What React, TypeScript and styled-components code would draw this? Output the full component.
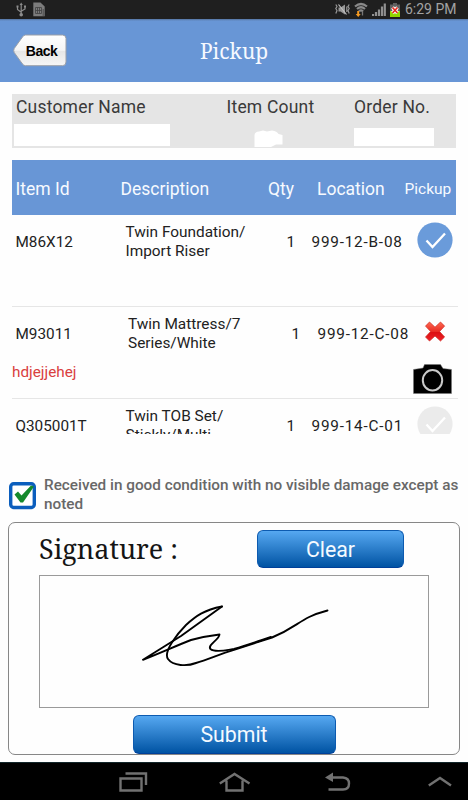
import React from 'react';
import styled, { createGlobalStyle } from 'styled-components';

const GlobalStyle = createGlobalStyle`
  * { box-sizing: border-box; }
  body { margin: 0; background: #fefefe; font-family: Roboto, "Liberation Sans", sans-serif; }
  button { font-family: inherit; }
`;

const Screen = styled.div`
  width: 468px;
  height: 800px;
  display: flex;
  flex-direction: column;
  overflow: hidden;
  background: #fefefe;
`;

const StatusBar = styled.div`
  height: 19px;
  flex: none;
  display: flex;
  align-items: center;
  justify-content: space-between;
  padding: 0 11.5px 0 16px;
  background: #1f1f1f;
`;

const StatusGroup = styled.div<{ $gap: number }>`
  display: flex;
  align-items: center;
  gap: ${(p) => p.$gap}px;
`;

const Clock = styled.span`
  font-size: 14px;
  line-height: 19px;
  color: #a3a3a3;
  margin-left: 1px;
`;

const Header = styled.header`
  height: 63px;
  flex: none;
  display: grid;
  grid-template-columns: 54px 1fr 54px;
  align-items: center;
  padding: 0 13px;
  background: linear-gradient(#55749f 0, #6896d6 2px);
`;

const BackButton = styled.button`
  display: grid;
  width: 54px;
  height: 33px;
  padding: 0;
  border: 0;
  background: none;

  > * { grid-area: 1 / 1; }
`;

const BackLabel = styled.span`
  align-self: center;
  padding-left: 3px;
  font: 700 14px/16px "Liberation Sans", sans-serif;
  letter-spacing: -0.5px;
  color: #000;
`;

const Title = styled.h1`
  margin: 0;
  text-align: center;
  font: 400 21px/30px "Noto Serif", serif;
  color: #f6f9ff;
`;

const InfoPanel = styled.section`
  flex: none;
  display: grid;
  grid-template-columns: 210.5px 127.5px 1fr;
  height: 54px;
  width: 444px;
  margin: 12px 0 0 12px;
  padding-left: 4px;
  background: #e5e5e5;
`;

const Field = styled.div`
  display: flex;
  flex-direction: column;
  justify-content: space-between;
  padding-bottom: 2px;
`;

const FieldLabel = styled.span`
  padding-top: 3px;
  font-size: 17.5px;
  line-height: 21px;
  letter-spacing: 0.2px;
  color: #3a3a3a;
  white-space: nowrap;
`;

const FieldValue = styled.div<{ $width: number; $height: number; $shift?: number }>`
  width: ${(p) => p.$width}px;
  height: ${(p) => p.$height}px;
  margin-left: ${(p) => p.$shift ?? 0}px;
  background: #fff;
`;

const BlankCount = styled.svg`
  display: block;
  width: 29px;
  height: 17px;
  margin: 0 0 -1px 27px;
`;

const TableHead = styled.div`
  flex: none;
  display: grid;
  grid-template-columns: 105px 147.5px 49px 87.5px 1fr;
  align-items: center;
  width: 444px;
  height: 55px;
  margin: 12px 0 0 12px;
  padding: 2px 0 0 3.5px;
  background: #6896d6;
  color: #f7faff;
`;

const HeadCell = styled.span<{ $small?: boolean }>`
  font-size: ${(p) => (p.$small ? 15.5 : 17.5)}px;
  line-height: 22px;
  white-space: nowrap;
`;

const ItemList = styled.div`
  flex: none;
  height: 219px;
  width: 446px;
  margin-left: 12px;
  overflow: hidden;
`;

const ItemRow = styled.div`
  height: 92px;
  border-bottom: 1px solid #e6e6e6;
  display: flex;
  justify-content: space-between;
`;

const ItemInfo = styled.div`
  width: 400px;
`;

const ItemCells = styled.div<{ $shifted?: boolean }>`
  display: grid;
  grid-template-columns:
    ${(p) => (p.$shifted ? '112.5px 163.5px 26px' : '110px 161px 25px')} 1fr;
  height: 55px;
  padding: 8px 0 0 3.5px;
`;

const Cell = styled.span<{ $spacing?: number }>`
  padding-top: 10px;
  font-size: 15.3px;
  line-height: 19px;
  letter-spacing: ${(p) => p.$spacing ?? 0}px;
  color: #222;
  white-space: nowrap;
`;

const DescriptionCell = styled.span`
  font-size: 15.4px;
  line-height: 18.7px;
  color: #222;
  white-space: pre-line;
`;

const Note = styled.div`
  padding-top: 1px;
  font-size: 15.3px;
  line-height: 18px;
  color: #d9403f;
`;

const ItemAction = styled.div`
  width: 46px;
  display: flex;
  flex-direction: column;
  align-items: center;
  padding-top: 7px;
`;

const Mark = styled.svg`
  display: block;
  flex: none;
`;

const CameraIcon = styled.svg`
  display: block;
  flex: none;
  width: 39px;
  height: 30px;
  margin: 14px 6px 0 0;
`;

const Consent = styled.label`
  flex: none;
  display: flex;
  gap: 7px;
  width: 451px;
  height: 88px;
  padding-top: 42px;
  margin-left: 9px;
`;

const CheckIcon = styled.svg`
  flex: none;
  width: 28px;
  height: 28px;
  margin-top: 6px;
`;

const ConsentText = styled.span`
  font-size: 15.3px;
  font-weight: 500;
  line-height: 18.6px;
  color: #686868;
  white-space: pre;
`;

const SignatureCard = styled.section`
  flex: none;
  display: flex;
  flex-direction: column;
  width: 452px;
  height: 233px;
  margin-left: 8px;
  border: 1px solid #878787;
  border-radius: 7px;
`;

const SignatureHead = styled.div`
  display: flex;
  justify-content: space-between;
  width: 395px;
  height: 52px;
  padding-left: 30px;
  padding-top: 7px;
`;

const SignatureLabel = styled.h2`
  margin: 0;
  font: 400 27px/37px "Noto Serif", serif;
  color: #151515;
`;

const ActionButton = styled.button<{ $width: number; $height: number }>`
  flex: none;
  width: ${(p) => p.$width}px;
  height: ${(p) => p.$height}px;
  padding: 1px 0 0;
  border: 1px solid #0d5bb0;
  border-bottom-color: #00409a;
  border-radius: 6px;
  background: linear-gradient(#56a8f1, #0053a3);
  color: #f5faff;
  font-size: 21.3px;
  line-height: 30px;
`;

const SubmitButton = styled(ActionButton)`
  margin: 7px 0 0 123.5px;
`;

const SignaturePad = styled.svg`
  display: block;
  flex: none;
  width: 390px;
  height: 133px;
  margin: 1px 0 0 30px;
  border: 1px solid #9a9a9a;
`;

const NavBar = styled.nav`
  flex: none;
  display: flex;
  align-items: center;
  height: 38px;
  margin-top: 7px;
  padding-left: 119px;
  border-top: 1px solid #12262a;
  background: #000;
`;

const NavIcon = styled.svg<{ $gap: number }>`
  flex: none;
  margin-right: ${(p) => p.$gap}px;
  fill: none;
  stroke: #717171;
  stroke-width: 2.4;
`;

const RoundCheck = ({ color }: { color: string }) => (
  <Mark width="36" height="36" viewBox="0 0 36 36">
    <circle cx="18" cy="18" r="17.6" fill={color} />
    <path d="M9.5 18.5L15.5 25L28 11.5" fill="none" stroke="#fff" strokeWidth="2.3" />
  </Mark>
);

const RedCross = () => (
  <Mark width="36" height="36" viewBox="0 0 36 36">
    <defs>
      <linearGradient id="cross" x1="0" y1="0" x2="0" y2="1">
        <stop offset="0" stopColor="#ff6a50" />
        <stop offset="0.5" stopColor="#e92c24" />
        <stop offset="0.55" stopColor="#dc1012" />
        <stop offset="1" stopColor="#ee2027" />
      </linearGradient>
    </defs>
    <path
      d="M12.5 8L18 13.2L23.5 8L27.6 12.1L22.6 17.5L27.6 23L23.5 27L18 22L12.5 27L8.5 23L13.6 17.5L8.5 12.1Z"
      fill="url(#cross)"
      stroke="#cc2620"
      strokeWidth="0.7"
      strokeLinejoin="round"
    />
  </Mark>
);

const Camera = () => (
  <CameraIcon viewBox="0 0 39 30">
    <path d="M0.5 5.5L10 4L11.5 0.5H27.5L30 4.5L38.5 5.5V29.5H0.5Z" fill="#000" stroke="#777" strokeWidth="0.5" />
    <ellipse cx="19.5" cy="16.3" rx="9.7" ry="10.2" fill="#000" stroke="#c9c9c9" strokeWidth="2" />
  </CameraIcon>
);

interface Item {
  id: string;
  description: string;
  location: string;
  note?: string;
  state: 'picked' | 'rejected' | 'pending';
}

const items: Item[] = [
  { id: 'M86X12', description: 'Twin Foundation/\nImport Riser', location: '999-12-B-08', state: 'picked' },
  { id: 'M93011', description: 'Twin Mattress/7\nSeries/White', location: '999-12-C-08', note: 'hdjejjehej', state: 'rejected' },
  { id: 'Q305001T', description: 'Twin TOB Set/\nStickly/Multi', location: '999-14-C-01', state: 'pending' },
];

const StatusIcons = () => (
  <>
    <Mark width="11" height="15" viewBox="0 0 11 15" fill="none" stroke="#8c8c8c" strokeWidth="1.2">
      <path d="M5.2 2V12M1.5 5V7.5L5.2 10.2M9 4.5V7L5.2 9.3" />
      <path d="M3.6 3L5.2 0.5L6.8 3Z" fill="#8c8c8c" stroke="none" />
      <circle cx="5.2" cy="12.7" r="1.8" fill="#8c8c8c" stroke="none" />
      <path d="M0.5 3.5H2.5V5.5H0.5ZM8 3.5H10V5.5H8Z" fill="#8c8c8c" stroke="none" />
    </Mark>
    <Mark width="12" height="15" viewBox="0 0 12 15">
      <path d="M0.3 0.5H7.5L11.7 4.5V14.2H0.3Z" fill="#7c7c7c" />
      <path d="M2.5 5.5H8.5V11.5H2.5ZM4.5 5.5V11.5M6.5 5.5V11.5M2.5 8.5H8.5M10.2 7V14" fill="none" stroke="#414141" strokeWidth="0.8" />
    </Mark>
  </>
);

const SignalIcons = () => (
  <>
    <Mark width="15" height="13" viewBox="0 0 15 13">
      <path d="M3.5 4.5H5.5L10 1.5V11.5L5.5 8.5H3.5Z" fill="#979797" />
      <path d="M3.5 1.5L11.5 11.5" stroke="#c0c0c0" strokeWidth="1.2" />
      <path d="M0.8 1.5L2 3.5L0.8 5.5L2 7.5L0.800 10.500M14.200 1.500L13 3.500L14.200 5.500L13 7.500L14.200 10.500M11.800 3.500V9" fill="none" stroke="#979797" strokeWidth="1.2" />
    </Mark>
    <Mark width="14" height="15" viewBox="0 0 14 15">
      <path d="M1 4.5Q7 -0.5 13 4.5M3 7Q7 3.5 11 7M5 9.3Q7 7.5 9 9.3" fill="none" stroke="#898989" strokeWidth="2.2" />
      <path d="M8.5 9V13.5" stroke="#777" strokeWidth="1.3" />
      <path d="M3.2 9H5.2V12H6.7L4.2 15L1.7 12H3.2Z" fill="#f69a20" />
    </Mark>
    <Mark width="14" height="14" viewBox="0 0 14 14">
      <path d="M1 13V11M4 13V9M7 13V6.5M10 13V3.5M12.8 13V0.5" stroke="#909090" strokeWidth="2.200" />
    </Mark>
    <Mark width="10" height="14" viewBox="0 0 10 14">
      <path d="M3 0H7V1.5H10V14H0V1.5H3Z" fill="#606060" />
      <path d="M0 8H10V14H0Z" fill="#91d600" />
      <path d="M2.500 4.500L7.500 10M7.500 4.500L2.500 10" stroke="#fff" strokeWidth="3.6" />
      <path d="M2.500 4.500L7.500 10M7.500 4.500L2.500 10" stroke="#e62b20" strokeWidth="1.700" />
    </Mark>
  </>
);

export default function App() {
  return (
    <>
      <GlobalStyle />
      <Screen>
        <StatusBar>
          <StatusGroup $gap={6}>
            <StatusIcons />
          </StatusGroup>
          <StatusGroup $gap={4}>
            <SignalIcons />
            <Clock>6:29 PM</Clock>
          </StatusGroup>
        </StatusBar>

        <Header>
          <BackButton>
            <svg width="54" height="33" viewBox="0 0 54 33">
              <defs>
                <linearGradient id="back" x1="0" y1="0" x2="0" y2="1">
                  <stop offset="0" stopColor="#ffffff" />
                  <stop offset="0.5" stopColor="#f5f5f5" />
                  <stop offset="0.52" stopColor="#e6e6e6" />
                  <stop offset="1" stopColor="#f6f6f6" />
                </linearGradient>
              </defs>
              <path
                d="M12.5 1H49.5Q53 1 53 4.5V28Q53 31.7 49.5 31.7H12.5Q10.8 31.7 9.5 30L1.2 18.500Q0.200 16.500 1.200 14.500L9.500 3Q10.800 1 12.500 1Z"
                fill="url(#back)"
                stroke="#9a9fa8"
                strokeWidth="1"
              />
            </svg>
            <BackLabel>Back</BackLabel>
          </BackButton>
          <Title>Pickup</Title>
        </Header>

        <InfoPanel>
          <Field>
            <FieldLabel>Customer Name</FieldLabel>
            <FieldValue $width={156} $height={22} $shift={-2} />
          </Field>
          <Field>
            <FieldLabel>Item Count</FieldLabel>
            <BlankCount viewBox="0 0 29 17">
              <path d="M0.5 17V5Q1 1.5 5 1.5L9 0.5L13 1.5L18 0.5Q23 1 24.500 4L28.500 5V14.500H22L17 17Z" fill="#fff" />
            </BlankCount>
          </Field>
          <Field>
            <FieldLabel>Order No.</FieldLabel>
            <FieldValue $width={80} $height={18} />
          </Field>
        </InfoPanel>

        <TableHead>
          <HeadCell>Item Id</HeadCell>
          <HeadCell>Description</HeadCell>
          <HeadCell>Qty</HeadCell>
          <HeadCell>Location</HeadCell>
          <HeadCell $small>Pickup</HeadCell>
        </TableHead>

        <ItemList>
          {items.map((item) => (
            <ItemRow key={item.id}>
              <ItemInfo>
                <ItemCells $shifted={item.state === 'rejected'}>
                  <Cell>{item.id}</Cell>
                  <DescriptionCell>{item.description}</DescriptionCell>
                  <Cell>1</Cell>
                  <Cell $spacing={0.8}>{item.location}</Cell>
                </ItemCells>
                {item.note && <Note>{item.note}</Note>}
              </ItemInfo>
              <ItemAction>
                {item.state === 'picked' && <RoundCheck color="#6a9bda" />}
                {item.state === 'pending' && <RoundCheck color="#ebebeb" />}
                {item.state === 'rejected' && (
                  <>
                    <RedCross />
                    <Camera />
                  </>
                )}
              </ItemAction>
            </ItemRow>
          ))}
        </ItemList>

        <Consent>
          <CheckIcon viewBox="0 0 28 28">
            <rect x="1.7" y="1.7" width="23.6" height="23.8" rx="3" fill="#fff" stroke="#0b5ebd" strokeWidth="3.4" />
            <path d="M5.500 12.500L9 9.500L12.500 13.500L22 3.500L25 4.500L14 20.500H11.500Z" fill="#14892c" />
          </CheckIcon>
          <ConsentText>{'Received in good condition with no visible damage except as\nnoted'}</ConsentText>
        </Consent>

        <SignatureCard>
          <SignatureHead>
            <SignatureLabel>Signature :</SignatureLabel>
            <ActionButton $width={147} $height={38}>Clear</ActionButton>
          </SignatureHead>
          <SignaturePad viewBox="40 576 388 131">
            <g fill="none" stroke="#000" strokeWidth="1.9" strokeLinecap="round" strokeLinejoin="round">
              <path d="M222 606.5L181 636L143 659.800C158 654 178 645 191 640C202 637 211 635.500 219.500 634.500C219 640 207 645 210.500 649C215 653 227 650 234 649C248 645 259 641 271 637" />
              <path d="M222 606.500C204 610 196 616 186 625C177 634 163 652 168 659C173 666 187 666.500 196 663C209 659 220 654 234 649.800L272 637.500C300 626 299 618 327.500 610.500" />
            </g>
          </SignaturePad>
          <SubmitButton $width={203} $height={39}>Submit</SubmitButton>
        </SignatureCard>

        <NavBar>
          <NavIcon $gap={71} width="29" height="20" viewBox="0 0 29 20">
            <path d="M1.500 6.500H22.500V18.500H1.500ZM6.500 1.500H27V13" />
          </NavIcon>
          <NavIcon $gap={74} width="32" height="20" viewBox="0 0 32 20">
            <path d="M0.800 11.500L15.500 2L30.500 11.500M7.500 8.500V18.500H23.500V8.500" />
          </NavIcon>
          <NavIcon $gap={77} width="26" height="20" viewBox="0 0 26 20">
            <path d="M7 5.500H18Q24 6 24 11.500Q24 17.500 18 17.500H3.500" />
            <path d="M0 5.500L8 0.500V10Z" fill="#717171" stroke="none" />
          </NavIcon>
          <NavIcon $gap={0} width="24" height="12" viewBox="0 0 24 12">
            <path d="M0.800 9.500L12 2L23 9.500" />
          </NavIcon>
        </NavBar>
      </Screen>
    </>
  );
}
